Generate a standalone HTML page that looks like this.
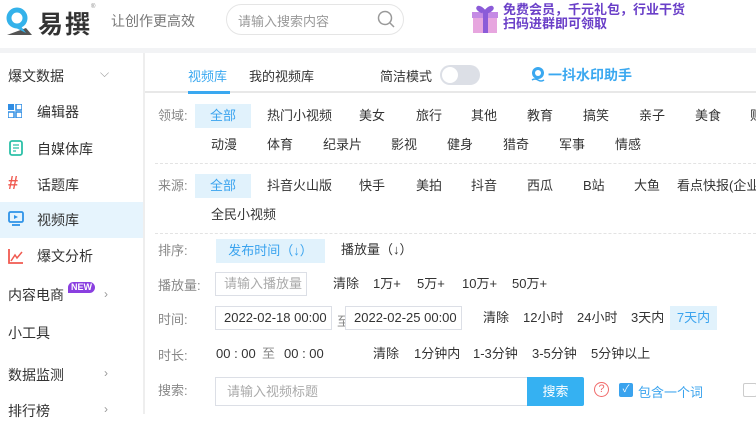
<!DOCTYPE html>
<html><head><meta charset="utf-8"><style>
*{margin:0;padding:0;box-sizing:border-box}
body{width:756px;height:414px;overflow:hidden;background:#fff;font-family:"Liberation Sans","Noto Sans CJK SC",sans-serif;color:#333;font-size:13px;position:relative}
.a{position:absolute;white-space:nowrap}
.g{color:#888}
.item{position:absolute;height:24px;line-height:24px;white-space:nowrap}
.sel{background:#e1f2fc;color:#3aa3ee}
.inp{position:absolute;border:1px solid #dcdfe6;height:24px;line-height:22px;padding-left:8px;color:#aaa;background:#fff}
.dash{position:absolute;left:155px;right:0;border-top:1px dashed #e3e3e3}
.side{position:absolute;left:0;width:143px;font-size:14px;color:#333}
.chev{position:absolute;color:#999;font-size:12px}
</style></head><body>
<svg class="a" style="left:4px;top:6px" width="30" height="30" viewBox="0 0 30 30"><circle cx="13" cy="12" r="8" fill="none" stroke="#34b2ea" stroke-width="5"/><path d="M3 29 L22 22 L28 29Z" fill="#555"/><path d="M16 19 L22 27 L12 22Z" fill="#34b2ea"/></svg>
<div class="a" style="left:38px;top:5px;font-size:25px;font-weight:bold;color:#333;letter-spacing:2px">易撰</div>
<div class="a" style="left:91px;top:4px;font-size:6px;color:#888">®</div>
<div class="a" style="left:111px;top:11px;font-size:14px;color:#777">让创作更高效</div>
<div class="a" style="left:226px;top:4px;width:178px;height:31px;border:1px solid #e5e5e5;border-radius:16px"></div>
<div class="a" style="left:238px;top:11px;font-size:13px;color:#999">请输入搜索内容</div>
<svg class="a" style="left:376px;top:9px" width="20" height="20" viewBox="0 0 20 20"><circle cx="9" cy="9" r="6.5" fill="none" stroke="#999" stroke-width="1.5"/><path d="M14 14 L18 18" stroke="#999" stroke-width="1.5"/></svg>
<svg class="a" style="left:470px;top:3px" width="30" height="32" viewBox="0 0 30 32"><rect x="3" y="12" width="24" height="18" fill="#e7a6df"/><rect x="2" y="9" width="26" height="6" fill="#c58be4"/><rect x="13" y="9" width="5" height="21" fill="#8b5bd8"/><path d="M15 9 C8 0 4 6 13 9 M15 9 C22 0 26 6 17 9" stroke="#8b5bd8" stroke-width="3" fill="#b58ae8"/></svg>
<div class="a" style="left:503px;top:3px;font-size:13px;line-height:14px;font-weight:bold;color:#6a3fc8;text-shadow:0 0 2px #fff">免费会员，千元礼包，行业干货<br>扫码进群即可领取</div>
<div class="a" style="left:0;top:48px;width:756px;height:5px;background:#f2f3f5"></div>
<div class="a" style="left:143px;top:53px;width:2px;height:361px;background:#eee"></div>
<div class="side" style="top:66px;left:8px">爆文数据</div><div class="chev" style="left:100px;top:66px">⌵</div>
<div class="side" style="top:202px;height:36px;background:#e6f4fd"></div>
<svg class="a" style="left:8px;top:104px" width="14" height="14"><rect x="0" y="0" width="6" height="6" fill="#2f8de4"/><rect x="8" y="0" width="6" height="6" fill="none" stroke="#2f8de4" stroke-width="1.5"/><rect x="0" y="8" width="6" height="6" fill="none" stroke="#2f8de4" stroke-width="1.5"/><rect x="8" y="8" width="6" height="6" fill="none" stroke="#2f8de4" stroke-width="1.5"/></svg>
<div class="side" style="top:102px;left:37px">编辑器</div>
<svg class="a" style="left:9px;top:140px" width="14" height="16"><rect x="1" y="1" width="12" height="14" rx="2" fill="none" stroke="#2cc0a8" stroke-width="1.8"/><path d="M4 5h6M4 8h6M4 11h3" stroke="#2cc0a8" stroke-width="1.3"/></svg>
<div class="side" style="top:139px;left:37px">自媒体库</div>
<div class="a" style="left:8px;top:173px;font-size:18px;font-weight:bold;color:#f05a50">#</div>
<div class="side" style="top:175px;left:37px">话题库</div>
<svg class="a" style="left:8px;top:211px" width="16" height="16"><rect x="1" y="1" width="14" height="10" rx="1.5" fill="none" stroke="#2e93e8" stroke-width="1.8"/><path d="M6 4 L10 6 L6 8Z" fill="#2e93e8"/><path d="M4 14h8" stroke="#2e93e8" stroke-width="1.8"/></svg>
<div class="side" style="top:210px;left:37px">视频库</div>
<svg class="a" style="left:8px;top:248px" width="16" height="16"><path d="M1 1V15H15" stroke="#f05a50" stroke-width="1.8" fill="none"/><path d="M3 13 L7 7 L9 10 L14 4" stroke="#f05a50" stroke-width="1.5" fill="none"/></svg>
<div class="side" style="top:246px;left:37px">爆文分析</div>
<div class="side" style="top:285px;left:8px">内容电商</div>
<div class="a" style="left:68px;top:282px;width:27px;height:11px;border-radius:6px 6px 6px 0;background:#8a3fe0;color:#fff;font-size:9px;font-weight:bold;line-height:11px;text-align:center">NEW</div>
<div class="chev" style="left:104px;top:287px">›</div>
<div class="side" style="top:323px;left:8px">小工具</div>
<div class="side" style="top:365px;left:8px">数据监测</div><div class="chev" style="left:104px;top:366px">›</div>
<div class="side" style="top:401px;left:8px">排行榜</div><div class="chev" style="left:104px;top:402px">›</div>
<div class="a" style="left:188px;top:66px;color:#3aa8f0">视频库</div>
<div class="a" style="left:249px;top:66px">我的视频库</div>
<div class="a" style="left:380px;top:66px">简洁模式</div>
<div class="a" style="left:440px;top:65px;width:40px;height:20px;border-radius:10px;background:#dcdfe6"></div>
<div class="a" style="left:442px;top:67px;width:16px;height:16px;border-radius:50%;background:#fff"></div>
<svg class="a" style="left:530px;top:66px" width="16" height="16"><circle cx="8" cy="7" r="6" fill="#3aa8f0"/><circle cx="8" cy="7" r="3" fill="#fff"/><path d="M2 14 q3 -2 6 0 q3 2 6 0" stroke="#3aa8f0" stroke-width="1.5" fill="none"/></svg>
<div class="a" style="left:548px;top:65px;color:#3aa8f0;font-size:14px;font-weight:bold">一抖水印助手</div>
<div class="a" style="left:145px;top:91px;width:611px;height:2px;background:#e8e8e8"></div>
<div class="a" style="left:188px;top:91px;width:42px;height:3px;background:#3aa8f0"></div>
<div class="a g" style="left:158px;top:105px">领域:</div>
<div class="item sel" style="left:195px;top:104px;width:56px;text-align:center">全部</div>
<div class="item" style="left:267px;top:104px">热门小视频</div>
<div class="item" style="left:359px;top:104px">美女</div>
<div class="item" style="left:416px;top:104px">旅行</div>
<div class="item" style="left:471px;top:104px">其他</div>
<div class="item" style="left:527px;top:104px">教育</div>
<div class="item" style="left:583px;top:104px">搞笑</div>
<div class="item" style="left:639px;top:104px">亲子</div>
<div class="item" style="left:695px;top:104px">美食</div>
<div class="item" style="left:750px;top:104px">财</div>
<div class="item" style="left:211px;top:133px">动漫</div>
<div class="item" style="left:267px;top:133px">体育</div>
<div class="item" style="left:323px;top:133px">纪录片</div>
<div class="item" style="left:391px;top:133px">影视</div>
<div class="item" style="left:447px;top:133px">健身</div>
<div class="item" style="left:503px;top:133px">猎奇</div>
<div class="item" style="left:559px;top:133px">军事</div>
<div class="item" style="left:615px;top:133px">情感</div>
<div class="dash" style="top:163px"></div>
<div class="a g" style="left:158px;top:175px">来源:</div>
<div class="item sel" style="left:195px;top:174px;width:56px;text-align:center">全部</div>
<div class="item" style="left:267px;top:174px">抖音火山版</div>
<div class="item" style="left:359px;top:174px">快手</div>
<div class="item" style="left:416px;top:174px">美拍</div>
<div class="item" style="left:471px;top:174px">抖音</div>
<div class="item" style="left:527px;top:174px">西瓜</div>
<div class="item" style="left:583px;top:174px">B站</div>
<div class="item" style="left:634px;top:174px">大鱼</div>
<div class="item" style="left:677px;top:174px">看点快报(企业</div>
<div class="item" style="left:211px;top:203px">全民小视频</div>
<div class="dash" style="top:233px"></div>
<div class="a g" style="left:158px;top:240px">排序:</div>
<div class="item sel" style="left:216px;top:239px;width:109px;text-align:center">发布时间（↓）</div>
<div class="item" style="left:341px;top:238px">播放量（↓）</div>
<div class="a g" style="left:158px;top:275px">播放量:</div>
<div class="inp" style="left:215px;top:272px;width:92px">请输入播放量</div>
<div class="item" style="left:333px;top:272px">清除</div>
<div class="item" style="left:373px;top:272px">1万+</div>
<div class="item" style="left:417px;top:272px">5万+</div>
<div class="item" style="left:462px;top:272px">10万+</div>
<div class="item" style="left:512px;top:272px">50万+</div>
<div class="a g" style="left:158px;top:309px">时间:</div>
<div class="inp" style="left:215px;top:306px;width:117px;color:#333">2022-02-18 00:00</div>
<div class="a g" style="left:337px;top:311px">至</div>
<div class="inp" style="left:345px;top:306px;width:117px;color:#333">2022-02-25 00:00</div>
<div class="item" style="left:483px;top:306px">清除</div>
<div class="item" style="left:523px;top:306px">12小时</div>
<div class="item" style="left:577px;top:306px">24小时</div>
<div class="item" style="left:631px;top:306px">3天内</div>
<div class="item sel" style="left:670px;top:306px;width:47px;text-align:center">7天内</div>
<div class="a g" style="left:158px;top:345px">时长:</div>
<div class="item" style="left:216px;top:342px">00 : 00</div>
<div class="item g" style="left:262px;top:342px">至</div>
<div class="item" style="left:284px;top:342px">00 : 00</div>
<div class="item" style="left:373px;top:342px">清除</div>
<div class="item" style="left:414px;top:342px">1分钟内</div>
<div class="item" style="left:473px;top:342px">1-3分钟</div>
<div class="item" style="left:532px;top:342px">3-5分钟</div>
<div class="item" style="left:591px;top:342px">5分钟以上</div>
<div class="a g" style="left:158px;top:380px">搜索:</div>
<div class="inp" style="left:215px;top:377px;width:313px;height:29px;line-height:27px;padding-left:11px">请输入视频标题</div>
<div class="a" style="left:527px;top:377px;width:57px;height:29px;background:#35b1f2;color:#fff;text-align:center;line-height:29px;border-radius:0 2px 2px 0">搜索</div>
<div class="a" style="left:594px;top:382px;width:15px;height:15px;border:1px solid #f06a6a;border-radius:50%;color:#f06a6a;font-size:11px;line-height:13px;text-align:center">?</div>
<div class="a" style="left:619px;top:383px;width:14px;height:14px;background:#3aa3ee;border-radius:2px;color:#fff;font-size:10px;line-height:14px;text-align:center">✓</div>
<div class="a" style="left:638px;top:382px;color:#3aa3ee">包含一个词</div>
<div class="a" style="left:743px;top:383px;width:14px;height:14px;border:1px solid #ccc;border-radius:2px"></div>
</body></html>
